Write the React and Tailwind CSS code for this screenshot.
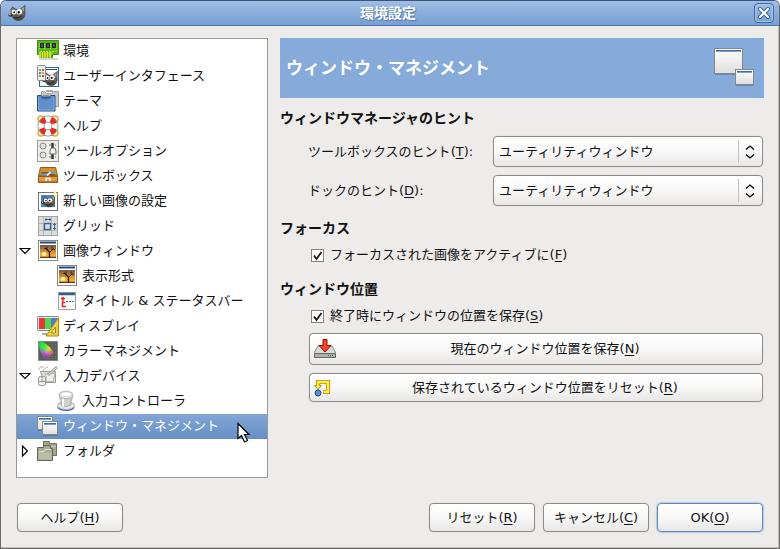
import React, { useState } from "react";

const Svg = ({ children, size = "size-[22px]", box = "0 0 22 22" }) => (
  <svg className={`${size} shrink-0`} viewBox={box} fill="none" aria-hidden="true">
    {children}
  </svg>
);

const Wilber = () => (
  <>
    <path d="M3 5 4.500 2l3.500 2.500h4L17 .5l-.3 6c.8 4-.7 7.500-4.200 8.500-4 1-7-.5-8.500-3.500z" fill="url(#fur)" stroke="#3a3833" strokeWidth=".8" />
    <path d="m13.500 4 2.800-2.500L16 6z" fill="#a8a49a" />
    <ellipse cx="5.800" cy="7" rx="2.300" ry="2.500" fill="#fff" />
    <ellipse cx="11.200" cy="6.800" rx="2.900" ry="2.700" fill="#fff" />
    <circle cx="6.200" cy="7.300" r="1" fill="#111" />
    <circle cx="10.800" cy="7.200" r="1.200" fill="#111" />
    <ellipse cx="2.500" cy="10" rx="2.300" ry="1.800" fill="#3b3935" />
    <circle cx="1.900" cy="9.400" r=".8" fill="#e8e8e4" />
    <path d="M6 12.500c2.500 1 5 .5 7.500-1.500" stroke="#1b1a18" />
  </>
);

const Picture = () => (
  <>
    <rect x="1.500" y=".5" width="19" height="20" fill="#fff" stroke="#888a85" />
    <path d="M3 2.500h16" stroke="#204a87" strokeWidth="2" />
    <rect x="3" y="5" width="16" height="13" fill="url(#dusk)" />
    <ellipse cx="7" cy="14" rx="2.500" ry="2" fill="#fff3a8" />
    <path d="M3 17h16v1H3z" fill="#5a3a18" />
    <path d="M12.500 18v-6l-4-4" stroke="#2c1c10" strokeWidth="1.300" />
    <path d="M12.500 12.500 17 8M10 9.500V6.500M15 10V6.500M7 8.500h2M16 9l2 1" stroke="#2c1c10" strokeWidth=".8" />
  </>
);

const Pane = ({ x, y, w, h }) => (
  <>
    <path d={`M${x + 1} ${y + h + 1.5}h${w}`} stroke="#000" strokeOpacity=".2" />
    <rect x={x + 0.5} y={y + 0.5} width={w} height={h} fill="url(#paneFill)" stroke="#85868a" />
    <path d={`M${x + 2} ${y + 2.5}h${w - 3}`} stroke="#3f6ca8" />
    <path d={`M${x + 2} ${y + 3.5}h${w - 3}`} stroke="#7d9fcb" />
  </>
);

const gamut = "M2 3q1-2.500 4-1 7 4 11 11l-8 5Q2 13 2 3z";

const icons = {
  environment: (
    <>
      <path d="M2 19h19" stroke="#d3d7cf" strokeWidth="2" />
      <path d="M.5.5h21v14h-6v3h-13v-3h-2z" fill="#57b81c" stroke="#3f8f0b" />
      <path d="M3 12v6M5.500 12v6M8 12v6M10.500 12v6M13 12v6" stroke="#f2e23a" strokeWidth="1.500" />
      <path d="M3 11.500h15M19 4v9M15 12v2" stroke="#c8dc22" strokeDasharray="2 1" />
      <path d="M3 3h4v5H3zM9 3h4v5H9zM15 3h4v5h-4z" fill="#252b29" />
      <path d="M2.500 4v5M7.500 4v5M13.500 4v5" stroke="#b7d69a" strokeDasharray="1 1" />
      <path d="M5 4v3M11 4v3M17 4v3" stroke="#77797b" />
    </>
  ),
  interface: (
    <>
      <rect x="2.500" y="2.500" width="19" height="19" fill="#fff" stroke="#3465a4" />
      <path d="M9 4.500h11" stroke="#204a87" />
      <g transform="translate(5 6) scale(.9 .95)"><Wilber /></g>
      <rect x=".5" y=".5" width="8" height="15" rx="1" fill="#eeeeec" stroke="#888a85" />
      <path d="M2 5h2M2 11h2" stroke="#73a946" strokeWidth="2" />
      <path d="M5 5h2M5 11h2" stroke="#d45050" strokeWidth="2" />
      <path d="M2 8h2" stroke="#4c7fc0" strokeWidth="2" />
      <path d="M5 8h2" stroke="#e7a13d" strokeWidth="2" />
    </>
  ),
  theme: (
    <>
      <path d="M4.500 1.500h3l2 2h5l2-2h5v15h-17z" fill="#c7cac2" stroke="#9a9c97" />
      <path d="M9 1h7" stroke="#888a85" strokeWidth="1.500" />
      <path d="M.5 5.500H4q1 2 5 2t5-2h4v15.500H.5z" fill="#5f90cb" stroke="#204a87" />
      <path d="M1.500 7v13h15.500V7" stroke="#86addc" />
      <path d="M4 7.500q5 3 10 0M6 6h6" stroke="#2e5d9b" />
    </>
  ),
  help: (
    <>
      <circle cx="4" cy="4" r="3" stroke="#d9b62c" strokeWidth="1.500" />
      <circle cx="18" cy="4" r="3" stroke="#d9b62c" strokeWidth="1.500" />
      <circle cx="4" cy="18" r="3" stroke="#d9b62c" strokeWidth="1.500" />
      <circle cx="18" cy="18" r="3" stroke="#d9b62c" strokeWidth="1.500" />
      <circle cx="11" cy="11" r="7" stroke="#8d8d8d" strokeWidth="7" />
      <circle cx="11" cy="11" r="7" stroke="#f4f4f2" strokeWidth="5.500" />
      <circle cx="11" cy="11" r="7" stroke="#e22b25" strokeWidth="5.500" strokeDasharray="5.500 5.500" strokeDashoffset="-2.700" />
    </>
  ),
  options: (
    <>
      <rect x=".5" y=".5" width="21" height="21" fill="#ecece8" stroke="#9a9c97" />
      <circle cx="6" cy="6" r="3" fill="#e6e6e2" stroke="#888a85" />
      <circle cx="6" cy="15" r="3" fill="#e6e6e2" stroke="#888a85" />
      <path d="M15.500 3v16" stroke="#2e3436" strokeWidth="2.500" />
      <path d="M14 8h4l1 3v3h-6v-3z" fill="#f4f4f2" stroke="#6c6e6a" />
      <path d="M12 5h2M12 17h2M18 5h1M18 17h1" stroke="#6c6e6a" />
    </>
  ),
  toolbox: (
    <>
      <path d="M3.500 2.500h15l2 8h-19z" fill="#cf8f3a" stroke="#9a5b14" />
      <path d="M4 7h14v4H4z" fill="#8a561b" />
      <path d="M4 9.500h7M12 8h6" stroke="#6a9bd8" strokeWidth="1.800" />
      <path d="M10 10.500 13.500 7" stroke="#e6e6e2" strokeWidth="1.800" />
      <rect x="1.500" y="11.500" width="19" height="6" fill="#dd9a3f" stroke="#9a5b14" />
      <path d="M2 16.500h18" stroke="#b9752a" />
      <path d="M9 16v-2.500h4V16" stroke="#eef3fa" strokeWidth="1.500" />
    </>
  ),
  newImage: (
    <>
      <rect x="1.500" y="2.500" width="19" height="18" fill="#fff" stroke="#6f716d" />
      <rect x="4" y="5" width="14" height="12" fill="#4482c8" />
      <g transform="translate(4 5) scale(.8 .78)"><Wilber /></g>
      <path d="m18 0 1 3 3 1-3 1-1 3-1-3-3-1 3-1z" fill="#ffe34b" />
      <circle cx="18" cy="4" r="1.800" fill="#fff9c2" />
    </>
  ),
  grid: (
    <>
      <rect x="1.500" y="1.500" width="19" height="19" fill="#dcded8" stroke="#a2a49f" />
      <path d="M6.500 2v18M14.500 2v18M2 8.500h18M2 15.500h18" stroke="#b4b7b0" />
      <rect x="7.500" y="8.500" width="6" height="6" stroke="#3465a4" strokeWidth="1.400" />
      <path d="M8 4.500h6M9 3v3M13 3v3M17.500 8v7M16 9.500h3M16 13.500h3" stroke="#3465a4" />
    </>
  ),
  picture: <Picture />,
  title: (
    <>
      <rect x="2.500" y="2.500" width="17" height="17" fill="#f8f8f8" stroke="#a0a29d" />
      <path d="M3 4h16" stroke="#315d9b" strokeWidth="2.500" />
      <path d="M5 8.500h4M7 7v4M6.500 11v6M6 12.500h3M6 16.500h4" stroke="#dc2020" strokeWidth="1.400" />
      <path d="M13 11.500h2M16 11.500h2M10 11.500h2" stroke="#6e706c" />
    </>
  ),
  display: (
    <>
      <path d="M5 19h10" stroke="#aaa" strokeWidth="2" />
      <rect x=".5" y="1.500" width="21" height="14" rx="1" fill="#eeeeec" stroke="#888a85" />
      <path d="M2 3h6v11H2z" fill="#ee3434" />
      <path d="M8 3h6v11H8z" fill="#4ed94b" />
      <path d="M14 3h6v11h-6z" fill="#4d79d9" />
      <path d="M21.500 2.500v18.500H9z" fill="#ecd04c" stroke="#b08b08" />
      <path d="M18.500 12v6H14z" fill="#fff4b0" stroke="#b08b08" />
    </>
  ),
  color: (
    <>
      <rect x="1.500" y="1.500" width="19" height="19" fill="#5c5e5a" stroke="#888a85" />
      <path d="M6 4.500h14M6 8.500h14M6 12.500h14M6 16.500h14M6 18.500h14" stroke="#74766f" strokeDasharray="1 2" />
      <path d={gamut} fill="url(#gamutTop)" />
      <path d={gamut} fill="url(#gamutLow)" />
    </>
  ),
  devices: (
    <>
      <path d="M2 5q0-4 5-3M6 6q1-3 5-4" stroke="#b4b6b1" />
      <path d="M3.500 6.500h15v11h-11z" fill="#d8dbd5" stroke="#9a9c97" />
      <path d="M9 8.500h9l-2 8H9z" fill="#eeeeec" stroke="#b2b4af" />
      <rect x="1.500" y="11.500" width="7" height="9" rx="2" fill="#eeeeec" stroke="#969893" />
      <path d="M5 12v4M2 16.500h6" stroke="#969893" />
      <path d="m11 10 9-8" stroke="#969893" strokeWidth="2.500" />
      <path d="m11.500 9.500 8-7" stroke="#eeeeec" />
    </>
  ),
  controller: (
    <>
      <ellipse cx="10" cy="17.500" rx="8.500" ry="3.500" fill="#3465a4" />
      <ellipse cx="10" cy="15.500" rx="8.500" ry="4" fill="#e6e6e3" stroke="#b0b2ad" />
      <path d="M3.500 5q0 4 1.500 6v4q5 3 10 0v-4q1.500-2 1.500-6z" fill="#cfd1cb" stroke="#a8aaa5" />
      <path d="M7 8v8" stroke="#fff" strokeWidth="2" />
      <ellipse cx="10" cy="5" rx="7" ry="3.800" fill="#e2e3df" stroke="#b0b2ad" />
      <ellipse cx="10" cy="4.300" rx="4.500" ry="1.800" fill="#fff" />
    </>
  ),
  windows: (
    <>
      <Pane x={0} y={1} w={15} h={13} />
      <Pane x={5} y={6} w={15} h={13} />
    </>
  ),
  folder: (
    <>
      <path d="M6.500 1.500h6v2h7v12h-13z" fill="#a3a58c" stroke="#6d705c" />
      <path d="M8 6.500h11" stroke="#d0d2bd" />
      <path d="M.5 7.500h6v-2h7v3h2v12H.5z" fill="#a9ab92" stroke="#62654f" />
      <path d="M2 11.500h5l1-2h6" stroke="#e0e1d3" />
      <path d="M1.500 12.500h13v7h-13z" fill="#babca5" />
    </>
  ),
};

const pages = [
  { id: "environment", label: "環境" },
  { id: "interface", label: "ユーザーインタフェース" },
  { id: "theme", label: "テーマ" },
  { id: "help", label: "ヘルプ" },
  { id: "options", label: "ツールオプション" },
  { id: "toolbox", label: "ツールボックス" },
  { id: "newImage", label: "新しい画像の設定" },
  { id: "grid", label: "グリッド" },
  { id: "imageWindows", icon: "picture", label: "画像ウィンドウ", arrow: "open" },
  { id: "appearance", icon: "picture", label: "表示形式", child: true },
  { id: "title", label: "タイトル & ステータスバー", child: true },
  { id: "display", label: "ディスプレイ" },
  { id: "color", label: "カラーマネジメント" },
  { id: "devices", label: "入力デバイス", arrow: "open" },
  { id: "controller", label: "入力コントローラ", child: true },
  { id: "windows", label: "ウィンドウ・マネジメント" },
  { id: "folder", label: "フォルダ", arrow: "closed" },
];

// Gradients shared by the icons
const Gradients = () => (
  <svg className="absolute size-0" aria-hidden="true">
    <linearGradient id="paneFill" x2="0" y2="1">
      <stop stopColor="#fff" />
      <stop offset="1" stopColor="#dededc" />
    </linearGradient>
    <linearGradient id="fur" x2="0" y2="1">
      <stop stopColor="#8d897f" />
      <stop offset="1" stopColor="#4a4741" />
    </linearGradient>
    <linearGradient id="dusk" x2="0" y2="1">
      <stop stopColor="#6e553a" />
      <stop offset=".45" stopColor="#c98a34" />
      <stop offset=".8" stopColor="#fbae2c" />
      <stop offset="1" stopColor="#b06c1c" />
    </linearGradient>
    <linearGradient id="gamutTop" x2="1" y2=".7">
      <stop stopColor="#12d83a" />
      <stop offset=".4" stopColor="#3cf02c" />
      <stop offset=".65" stopColor="#f7ea1c" />
      <stop offset="1" stopColor="#fb1f1f" />
    </linearGradient>
    <linearGradient id="gamutLow" x1=".35" y1="1" x2=".6" y2=".35">
      <stop stopColor="#2d24fb" />
      <stop offset=".35" stopColor="#c22cf0" stopOpacity=".85" />
      <stop offset="1" stopColor="#2ce8f0" stopOpacity="0" />
    </linearGradient>
  </svg>
);

const Key = ({ text, letter, tail = "" }) => (
  <span>
    {text}(<span className="underline underline-offset-2">{letter}</span>){tail}
  </span>
);

const buttonLook =
  "rounded border border-[#8e8b88] bg-linear-to-b from-white from-0% via-[#f8f8f8] via-50% to-[#e8e7e5] shadow-[0_0_1px_#bbb]";

const Button = ({ children, className = "" }) => (
  <button type="button" className={`flex items-center justify-center ${buttonLook} ${className}`}>
    {children}
  </button>
);

const TreeRow = ({ page, selected, onSelect }) => (
  <li className="relative">
    <button
      type="button"
      onClick={() => onSelect(page.id)}
      className={`flex h-[25px] w-full items-center pb-px pl-0.5 text-left ${
        selected ? "bg-linear-to-b from-[#82a6d6] to-[#648fc5] text-white" : ""
      }`}
    >
      <span className={page.child ? "w-[37px]" : "w-[18px]"}>
        {page.arrow && (
          <Svg size="size-3" box="0 0 12 12">
            <path
              d={page.arrow === "open" ? "M1 3.500h10L6 8.500z" : "M3.500 1v10L8.500 6z"}
              fill="#fff"
              stroke="#000"
              strokeWidth="1.200"
            />
          </Svg>
        )}
      </span>
      <Svg>{icons[page.icon || page.id]}</Svg>
      <span className="ml-1 whitespace-nowrap">{page.label}</span>
    </button>
    {page.id === "windows" && (
      <svg className="pointer-events-none absolute top-2 right-4 z-10 h-[21px] w-[14px]" viewBox="0 0 14 21" aria-hidden="true">
        <path d="M1 1.500v15l3.500-3 3 6.500 3-1.500-3-6H12z" fill="#fff" stroke="#000" strokeWidth="1.200" />
      </svg>
    )}
  </li>
);

const Select = ({ id }) => (
  <div className="relative w-[270px] shrink-0">
    <select id={id} className={`h-[31px] w-full appearance-none pr-8 pl-[5px] ${buttonLook}`}>
      <option>ユーティリティウィンドウ</option>
    </select>
    <div className="pointer-events-none absolute inset-y-1 right-0 flex w-[25px] items-center justify-center border-l border-[#c4c2c0] pr-0.5">
      <Svg size="h-3.5 w-2.5" box="0 0 10 14">
        <path d="m1 4.500 4-3.500 4 3.500M1 9.500l4 3.500 4-3.500" stroke="#000" strokeWidth="1.300" />
      </Svg>
    </div>
  </div>
);

const Check = ({ id, text, letter }) => {
  const [checked, setChecked] = useState(true);
  return (
    <div className="ml-[31px] flex h-6 items-center gap-1.5">
      <span className="relative size-[13px]">
        <input
          id={id}
          type="checkbox"
          checked={checked}
          onChange={() => setChecked(!checked)}
          className="block size-[13px] appearance-none border border-[#85827f] bg-white"
        />
        {checked && (
          <svg className="pointer-events-none absolute inset-0" viewBox="0 0 13 13" fill="none" aria-hidden="true">
            <path d="m3 6.500 2.500 3.500L10.500 3" stroke="#1a1a1a" strokeWidth="1.800" />
          </svg>
        )}
      </span>
      <label htmlFor={id}>
        <Key text={text} letter={letter} />
      </label>
    </div>
  );
};

const Heading = ({ children }) => <h2 className="h-5 text-[14px] leading-5 font-bold">{children}</h2>;

const App = () => {
  const [current, setCurrent] = useState("windows");

  return (
    <div className="flex min-h-screen flex-col overflow-hidden rounded-t-md border border-[#6b6967] border-t-[#3c5472] bg-[#edecea] font-['DejaVu_Sans','Noto_Sans_CJK_JP',sans-serif] text-[13px] leading-5 text-[#111] shadow-[inset_-1px_-1px_0_#c3c0bd]">
      <Gradients />
      <header className="flex h-[25px] items-center justify-between border-b border-[#4a75ad] bg-linear-to-b from-[#9fbde6] to-[#779fd1] pr-[5px] pl-[7px]">
        <Svg size="h-4 w-[18px]" box="0 0 18 16">
          <Wilber />
        </Svg>
        <h1 className="mr-1 text-[14px] font-bold text-white [text-shadow:1px_1px_1px_#4c74a8]">環境設定</h1>
        <button
          type="button"
          aria-label="閉じる"
          className="flex size-5 items-center justify-center rounded border border-[#3d6aa3] bg-linear-to-b from-[#9fbde6] to-[#7ca3d5] shadow-[inset_0_0_0_1px_#a9c5ea]"
        >
          <Svg size="size-3.5" box="0 0 14 14">
            <path d="m3 3 8 8M11 3l-8 8" stroke="#345f97" strokeWidth="4" strokeLinecap="round" />
            <path d="m3 3 8 8M11 3l-8 8" stroke="#fff" strokeWidth="2.200" strokeLinecap="round" />
          </Svg>
        </button>
      </header>

      <div className="flex flex-1 flex-col px-[15px] pt-3 pb-4">
        <div className="flex flex-1 gap-3">
          <ul className="w-[252px] shrink-0 border border-[#9b9895] bg-white">
            {pages.map((page) => (
              <TreeRow key={page.id} page={page} selected={page.id === current} onSelect={setCurrent} />
            ))}
          </ul>

          <main className="min-w-0 flex-1">
            <div className="flex h-[60px] items-center justify-between bg-[#86aad9] pr-2 pl-1.5 text-white">
              <h2 className="text-[17px] font-bold">ウィンドウ・マネジメント</h2>
              <Svg size="h-10 w-[42px]" box="0 0 42 40">
                <Pane x={0} y={0} w={28} h={25} />
                <Pane x={21} y={21} w={18} h={15} />
              </Svg>
            </div>

            <form className="mt-2.5 flex flex-col gap-3" onSubmit={(e) => e.preventDefault()}>
              <section className="flex flex-col gap-2">
                <Heading>ウィンドウマネージャのヒント</Heading>
                <div className="mr-px ml-7 flex items-center justify-between">
                  <label htmlFor="toolbox-hint">
                    <Key text="ツールボックスのヒント" letter="T" tail=":" />
                  </label>
                  <Select id="toolbox-hint" />
                </div>
                <div className="mr-px ml-7 flex items-center justify-between">
                  <label htmlFor="dock-hint">
                    <Key text="ドックのヒント" letter="D" tail=":" />
                  </label>
                  <Select id="dock-hint" />
                </div>
              </section>

              <section className="flex flex-col gap-[5px]">
                <Heading>フォーカス</Heading>
                <Check id="activate" text="フォーカスされた画像をアクティブに" letter="F" />
              </section>

              <section className="flex flex-col gap-[5px]">
                <Heading>ウィンドウ位置</Heading>
                <Check id="save-positions" text="終了時にウィンドウの位置を保存" letter="S" />
                <div className="mr-px ml-[29px] flex flex-col gap-2">
                  <Button className="h-8 px-1">
                    <Svg>
                      <path d="m4 8-4 7v4h22v-4l-4-7z" fill="#d9dbd8" stroke="#888a85" />
                      <path d="M.5 15.500h21v4H.5z" fill="#aeb1ac" stroke="#666864" />
                      <path d="M14 17.500h6" stroke="#555753" strokeDasharray="1 1" />
                      <path d="M9 1.500h4v6h4L11 14 5 7.500h4z" fill="#ed4b25" stroke="#a40000" />
                    </Svg>
                    <span className="flex-1 pr-1">
                      <Key text="現在のウィンドウ位置を保存" letter="N" />
                    </span>
                  </Button>
                  <Button className="h-[29px] px-1">
                    <Svg size="size-[18px]" box="0 0 18 18">
                      <path d="M4 7V3h10v10H9" stroke="#b39105" strokeWidth="4.200" />
                      <path d="M.5 6.500h7L4 10.500z" fill="#fce94f" stroke="#b39105" />
                      <path d="M4 7.500V3h10v10H9.500" stroke="#fce94f" strokeWidth="2.400" />
                      <circle cx="4" cy="14" r="3" fill="#5d8fce" stroke="#204a87" />
                    </Svg>
                    <span className="flex-1">
                      <Key text="保存されているウィンドウ位置をリセット" letter="R" />
                    </span>
                  </Button>
                </div>
              </section>
            </form>
          </main>
        </div>

        <footer className="mt-[25px] mr-px ml-px flex gap-2">
          <Button className="mr-auto h-[29px] w-[106px]">
            <Key text="ヘルプ" letter="H" />
          </Button>
          <Button className="h-[29px] w-[106px]">
            <Key text="リセット" letter="R" />
          </Button>
          <Button className="h-[29px] w-[106px]">
            <Key text="キャンセル" letter="C" />
          </Button>
          <Button className="h-[29px] w-[106px] border-[#6488b9]! shadow-[0_0_1px_1px_#b4cbe9]!">
            <Key text="OK" letter="O" />
          </Button>
        </footer>
      </div>
    </div>
  );
};

export default App;
